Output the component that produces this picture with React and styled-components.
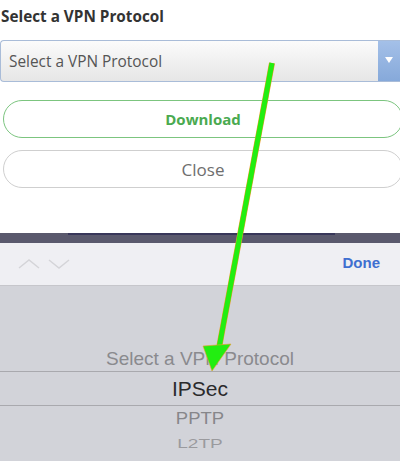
import styled, { createGlobalStyle } from 'styled-components';

const GlobalStyle = createGlobalStyle`
  html, body {
    margin: 0;
    padding: 0;
    background: #fff;
  }
`;

export default function App() {
  return (
    <>
      <GlobalStyle />
      <Page>
        <Sheet>
          <Title>Select a VPN Protocol</Title>
          <SelectBox>
            <SelectText>Select a VPN Protocol</SelectText>
            <SelectCaret>
              <svg width="8" height="6" viewBox="0 0 8 6">
                <path d="M0 0 L8 0 L4 6 Z" fill="#fff" />
              </svg>
            </SelectCaret>
          </SelectBox>
          <PillButton $variant="primary">Download</PillButton>
          <PillButton>Close</PillButton>
        </Sheet>

        <Strip>
          <StripLine />
        </Strip>

        <Toolbar>
          <Arrows>
            <svg width="22" height="10" viewBox="0 0 22 10">
              <path d="M1 9 L11 1 L21 9" fill="none" stroke="#d4d4d8" strokeWidth="1.5" />
            </svg>
            <svg width="22" height="10" viewBox="0 0 22 10">
              <path d="M1 1 L11 9 L21 1" fill="none" stroke="#d4d4d8" strokeWidth="1.5" />
            </svg>
          </Arrows>
          <DoneButton>Done</DoneButton>
        </Toolbar>

        <Picker>
          <PickerItem $size={19} $color="#8a8a8e">Select a VPN Protocol</PickerItem>
          <SelectedRow>
            <PickerItem $size={21} $color="#2a2a2c">IPSec</PickerItem>
          </SelectedRow>
          <PickerItem $size={18.5} $color="#86868a" $squash={0.88}>PPTP</PickerItem>
          <PickerItem $size={19} $color="#9a9a9e" $squash={0.7}>L2TP</PickerItem>
        </Picker>

        <Overlay width="400" height="461" viewBox="0 0 400 461">
          <line x1="272" y1="63" x2="219" y2="348" stroke="#f29a2e" strokeWidth="6" />
          <line x1="272" y1="63" x2="219" y2="348" stroke="#22ee11" strokeWidth="5" />
          <path d="M203 346 L231 344 L212 371 Z" fill="#22ee11" stroke="#f29a2e" strokeWidth="0.6" />
        </Overlay>
      </Page>
    </>
  );
}

const Page = styled.div`
  position: relative;
  width: 400px;
  height: 461px;
  overflow: hidden;
  display: flex;
  flex-direction: column;
  font-family: 'Open Sans', 'Liberation Sans', sans-serif;
`;

const Sheet = styled.div`
  background: #fff;
  padding: 6px 0 45px;
  display: flex;
  flex-direction: column;
`;

const Title = styled.div`
  font-weight: bold;
  font-size: 15.3px;
  line-height: 20px;
  color: #333;
  padding-left: 1px;
`;

const SelectBox = styled.div`
  margin-top: 14px;
  height: 42px;
  width: 400px;
  box-sizing: border-box;
  border: 1px solid #a9bcd8;
  border-right: none;
  border-radius: 4px 0 0 4px;
  background: linear-gradient(#fbfbfb, #e6e6e6);
  display: flex;
  align-items: center;
  justify-content: space-between;
`;

const SelectText = styled.span`
  padding-left: 8px;
  font-size: 15.4px;
  color: #555;
`;

const SelectCaret = styled.div`
  width: 22px;
  height: 100%;
  background: linear-gradient(#a4c0e8, #86a9da);
  display: flex;
  align-items: center;
  justify-content: center;
  padding-bottom: 3px;
  box-sizing: border-box;
`;

const PillButton = styled.div`
  margin: ${({ $variant }) => ($variant === 'primary' ? '18px' : '12px')} 0 0 3px;
  width: 400px;
  height: 38px;
  box-sizing: border-box;
  border: 1px solid ${({ $variant }) => ($variant === 'primary' ? '#7cc57f' : '#cfcfcf')};
  border-radius: 19px;
  display: flex;
  align-items: center;
  justify-content: center;
  font-size: ${({ $variant }) => ($variant === 'primary' ? '15px' : '17px')};
  font-weight: ${({ $variant }) => ($variant === 'primary' ? 'bold' : 'normal')};
  color: ${({ $variant }) => ($variant === 'primary' ? '#4aaa50' : '#6e6e6e')};
`;

const Strip = styled.div`
  height: 10px;
  background: #5a596d;
  padding-left: 68px;
`;

const StripLine = styled.div`
  width: 267px;
  height: 2px;
  background: #38375a;
`;

const Toolbar = styled.div`
  height: 42px;
  background: #efeff3;
  border-bottom: 1px solid #c6c6cb;
  display: flex;
  align-items: center;
  justify-content: space-between;
  padding: 0 20px 0 18px;
`;

const Arrows = styled.div`
  display: flex;
  gap: 8px;
`;

const DoneButton = styled.span`
  font-family: 'Liberation Sans', Arial, sans-serif;
  font-size: 15px;
  font-weight: bold;
  color: #3f6fd0;
  margin-top: -3px;
`;

const Picker = styled.div`
  flex: 1;
  background: #d2d3d9;
  padding-top: 60px;
  display: flex;
  flex-direction: column;
  font-family: 'Liberation Sans', Arial, sans-serif;
`;

const SelectedRow = styled.div`
  border-top: 1px solid #a9a9ae;
  border-bottom: 1px solid #a9a9ae;
  height: 33px;
  display: flex;
  align-items: center;
  justify-content: center;
`;

const PickerItem = styled.div`
  height: 25px;
  line-height: 25px;
  text-align: center;
  font-size: ${({ $size }) => $size}px;
  color: ${({ $color }) => $color};
  transform: scaleY(${({ $squash }) => $squash || 1});
`;

const Overlay = styled.svg`
  position: absolute;
  left: 0;
  top: 0;
  pointer-events: none;
`;
